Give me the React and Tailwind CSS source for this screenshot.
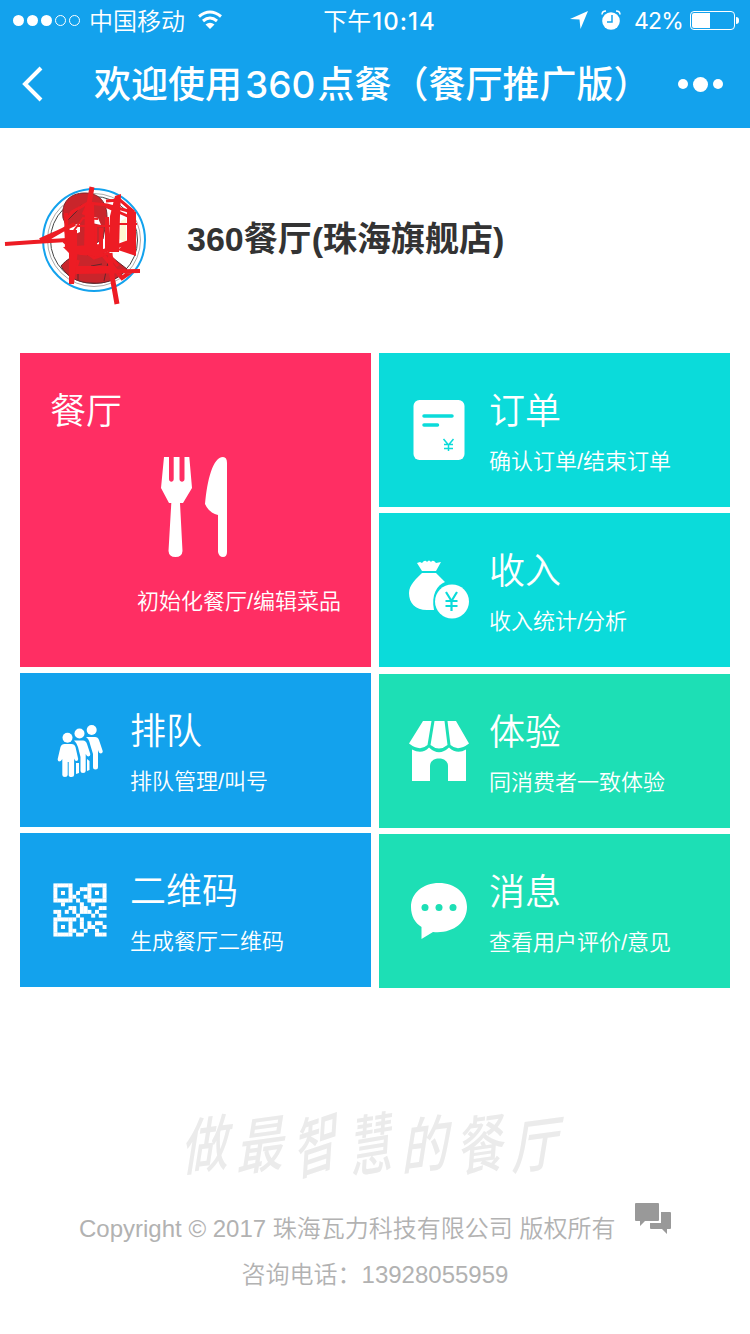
import React from "react";

const qrRows = [
  "11111....11111",
  "1...1..111...1",
  "1.1.1.1..1.1.1",
  "1...11..11...1",
  "11111.1..11111",
  "..1....1..1...",
  "....11.11...11",
  "11.1.1.111.1..",
  ".1....1...1.11",
  "111111.1......",
  "1...1..1.1.11.",
  "1.1.1..1.11..1",
  "1...11..1..1..",
  "11111.11...111",
];

const ForkKnife = () => (
  <svg width="68" height="100" viewBox="0 0 68 100" fill="white">
    <path d="M3 0H8V22C8 25.500 12.700 25.500 12.700 22V0H18.500V22C18.500 25.500 23.500 25.500 23.500 22V0H28.300L31 31L22 46H19L21.500 94Q21 100 14.500 100Q8 100 7.500 94L10.300 46H8L0 31Z" />
    <path d="M66 6Q66 0 62 0C52 0 46 23 44 47Q48 56 57 58V95Q58 100 62 100Q66 100 66 95Z" />
  </svg>
);

const OrderIcon = () => (
  <svg width="60" height="60" viewBox="0 0 60 60">
    <rect x="4.500" width="51" height="60" rx="6" fill="white" />
    <path d="M15 16H43M15 25H28.500" stroke="#0bdbda" strokeWidth="3.5" strokeLinecap="round" />
    <path d="M34.500 39L39.500 45L44.500 39M39.500 45V51M35 44.500H44M35 48.500H44" stroke="#0bdbda" strokeWidth="1.500" fill="none" />
  </svg>
);

const IncomeIcon = () => (
  <svg width="60" height="60" viewBox="0 0 60 60">
    <path d="M8 3L11 2L13 3Q16-1 18 2Q20-1 22 2Q24-1 27 3L32 2L27 11H13Z" fill="white" />
    <path d="M13 13H27L36 22C28 25 22 35 25 50H18C6 50 0 43 0 33C0 25 7 19 13 13Z" fill="white" />
    <circle cx="43" cy="41.500" r="17" fill="white" />
    <path d="M37 32L42.500 41L48 32M42.500 41V51M36.500 41H48.500M36.500 46H48.500" stroke="#0bdbda" strokeWidth="2.200" fill="none" />
  </svg>
);

const ShopIcon = () => (
  <svg width="60" height="60" viewBox="0 0 60 60" fill="white">
    <path d="M14 0H22.500L18.500 24Q11 31 0 22.500ZM25.500 0H35.500L38.500 24Q30 31 21.500 24ZM38.500 0H47L60 22.500Q49 31 41.500 24Z" />
    <path d="M3 28.500Q13 34 20 26.500Q30 36 40 26.500Q48 34 57 28.500V60H39V45C39 35 21 35 21 45V60H3Z" />
  </svg>
);

const MessageIcon = () => (
  <svg width="60" height="60" viewBox="0 0 60 60">
    <path d="M30 2C46 2 58 12 58 26C58 42 43 53 24 51L12.500 58V46C6 42 2 35 2 26C2 12 14 2 30 2Z" fill="white" />
    <g fill="#1ddfb5">
      <circle cx="16" cy="26.500" r="3.500" />
      <circle cx="30" cy="26.500" r="3.500" />
      <circle cx="44" cy="26.500" r="3.500" />
    </g>
  </svg>
);

const QueueIcon = () => (
  <svg width="60" height="60" viewBox="0 0 60 60" fill="white">
    <circle cx="41.700" cy="10" r="5" />
    <path d="M36 17H45Q48 17 49 20L52.700 31Q53 33 51 33.500Q49 33.500 48 30V47Q48 49.500 45.500 49.500Q43 49.500 43 47V34L40 24Q39 19 36 17Z" />
    <path d="M37 39L39.500 41V50L37 51Z" />
    <circle cx="29.500" cy="13.500" r="5" />
    <path d="M24 20.500H33Q36 20.500 37 24L40.300 34Q40.500 36 38.500 36.500Q37 36.500 35.700 34V51Q35.700 53 33 53Q30.500 53 30.500 51V37L28 27Q27 23 24 20.500Z" />
    <path d="M26 43H29V53L26 54Z" />
    <g transform="translate(7.500 13)">
      <circle cx="10" cy="4.700" r="5" />
      <path d="M7 11H14Q17 11 18 14L20.700 26Q20.700 28 18.800 28Q17.500 28 16.600 25.500V42Q16.600 44 14 44Q11.200 44 11.200 42V29H10.200V42Q10 44 7.500 44Q4.800 44 4.800 42V26Q3.500 28.500 1.500 28.500Q0 28 .2 26L3 14Q4 11 7 11Z" />
    </g>
  </svg>
);

const QrIcon = () => (
  <svg width="60" height="60" viewBox="0 0 60 60" fill="white">
    {qrRows.map((row, y) =>
      row.split("").map((c, x) =>
        c === "1" ? (
          <rect key={x + "-" + y} x={3.4 + x * 3.78} y={3.4 + y * 3.78} width="4" height="4" />
        ) : null
      )
    )}
  </svg>
);

const Tile = ({ icon, title, desc, className }) => (
  <div className={"flex h-[154px] pl-[30px] pt-[47px] text-white " + className}>
    {icon}
    <div className="-mt-3 ml-5 whitespace-nowrap">
      <div className="text-[36px] font-[350] leading-[48px]">{title}</div>
      <div className="mt-[10px] text-[22px] font-[350] leading-8">{desc}</div>
    </div>
  </div>
);

const StatusBar = () => (
  <div className="flex h-10 items-center justify-between pl-[13px] pr-[11px] font-['Inter','Noto_Sans_CJK_SC',sans-serif] text-2xl">
    <div className="flex w-[308px] items-center">
      <div className="flex gap-[3px]">
        <i className="size-[11px] rounded-full bg-white" />
        <i className="size-[11px] rounded-full bg-white" />
        <i className="size-[11px] rounded-full bg-white" />
        <i className="size-[11px] rounded-full border border-white" />
        <i className="size-[11px] rounded-full border border-white" />
      </div>
      <span className="mt-[3px] ml-[9px] font-[350]">中国移动</span>
      <svg className="ml-3" width="26" height="20" viewBox="0 0 26 20">
        <path d="M2 6.500Q13-2.500 24 6.500M6 11Q13 5 20 11" stroke="white" strokeWidth="3" fill="none" />
        <path d="M8.500 14.500Q13 11 17.500 14.500L13 19Z" fill="white" />
      </svg>
    </div>
    <div className="mt-[3px] flex whitespace-nowrap">
      <span className="font-normal">下午</span>
      <span className="ml-px font-medium tracking-[1px]">10:14</span>
    </div>
    <div className="flex w-[301px] items-center justify-end">
      <svg className="mt-px" width="18" height="19" viewBox="0 0 18 19" fill="white">
        <path d="M18 0L10.500 18L9.500 8.500L0 8Z" />
      </svg>
      <svg className="ml-[13px]" width="20" height="20" viewBox="0 0 20 20">
        <circle cx="10" cy="11" r="8.800" fill="white" />
        <path d="M1 4.500Q1 1 5 1M15 1Q19 1 19 4.500" stroke="white" strokeWidth="1.500" fill="none" />
        <path d="M11 5V12H6" stroke="#13a2ed" strokeWidth="1.500" fill="none" />
      </svg>
      <span className="mt-[3px] ml-[13px] text-[23px] tracking-[-0.8px]">42%</span>
      <div className="ml-[7px] flex h-[19px] w-[45px] rounded-[4px] border border-white p-px">
        <i className="w-[18px] rounded-l-[2px] bg-white" />
      </div>
      <i className="ml-px h-[7px] w-[3px] rounded-r-full bg-white" />
    </div>
  </div>
);

const Avatar = () => (
  <svg width="150" height="130" viewBox="0 0 150 130" fill="none">
    <circle cx="94" cy="65" r="51" fill="white" stroke="#13a2ed" strokeWidth="2" />
    <circle cx="94" cy="65" r="46.500" stroke="#aaa" />
    <circle cx="94" cy="65" r="43.500" stroke="#444" />
    <path d="M63 43C61 27 70 18 85 18C100 18 107 28 107 42L103 64L78 79Z" fill="#c9252b" stroke="#81272b" />
    <path d="M61 91C67 84 72 82 80 78H107L118 87L127 94C118 106 103 109 92 108C78 108 67 102 61 91Z" fill="#c9252b" stroke="#65252b" />
    <path d="M78 93V105M108 87L104 106M68 40L82 30M67 46L78 35M87 80L98 76L104 82M91 91L102 89" stroke="#65252b" />
    <path d="M69 52L80 48L80 57L71 61ZM90 41L98 43L101 50L92 48Z" fill="white" />
    <path d="M121 46L126 43V68L119 64Z" fill="#fff8d2" />
    <g stroke="#ed1c24" strokeWidth="4">
      <path d="M5 69L34 67L67 65H77M40 65L58 57L75 49M47 64L66 53" />
      <path d="M66 38L67 74M70 55L72 104L78 85" />
      <path d="M66 45L72 37L88 28L107 30L132 37M106 26L120 25L134 37M105 31L132 43" strokeWidth="3" />
      <path d="M92 12L89 29L84 40" strokeWidth="5" />
      <path d="M70 61L83 43L98 44M77 51H111M112 49H137" strokeWidth="2" />
      <path d="M64 66L75 75L104 76L132 66M95 51V70M101 53V76M107 42V74" />
      <path d="M76 97L140 96M104 81L122 103L132 96" />
      <path d="M110 78L112 101L117 129" strokeWidth="5" />
      <path d="M80 72L94 83L108 78L118 91" strokeWidth="3" />
    </g>
    <path d="M64 55H77V75H69ZM69 75H78L74 109H69ZM85 31L94 28L95 76H84ZM115 21L121 19L120 40L119 77H108L110 41ZM127 33L136 37V81L118 75L127 66ZM63 72L101 69L104 82L70 79ZM76 91H115V98H76Z" fill="#ed1c24" />
  </svg>
);

const App = () => {
  return (
    <div className="h-[1334px] w-[750px] overflow-hidden bg-white font-['Liberation_Sans','Noto_Sans_CJK_SC',sans-serif]">
      <header className="h-32 bg-[#13a2ed] text-white">
        <StatusBar />
        <div className="flex h-[88px] items-center pl-[22px] pr-[27px]">
          <svg width="21" height="36" viewBox="0 0 21 36" fill="none">
            <path d="M19 2L3 18L19 34" stroke="white" strokeWidth="4" />
          </svg>
          <h1 className="mt-[2px] ml-[51px] font-['Inter','Noto_Sans_CJK_SC',sans-serif] text-[37px] font-medium whitespace-nowrap">
            欢迎使用<span className="mr-[2px] ml-[3px]">360</span>点餐（餐厅推广版）
          </h1>
          <div className="ml-auto flex items-center gap-[5px]">
            <i className="size-[10px] rounded-full bg-white" />
            <i className="size-[15px] rounded-full bg-white" />
            <i className="size-[10px] rounded-full bg-white" />
          </div>
        </div>
      </header>

      <div className="flex h-[225px] pt-[47px]">
        <Avatar />
        <h2 className="ml-[37px] mt-[39px] text-[34px] font-bold leading-[50px] text-[#333]">360餐厅(珠海旗舰店)</h2>
      </div>

      <main className="flex gap-2 px-5">
        <div className="flex w-[351px] flex-col gap-[6px]">
          <div className="flex h-[314px] flex-col bg-[#ff2e63] text-white">
            <div className="mt-[35px] ml-[30px] text-[36px] font-[350] leading-[48px]">餐厅</div>
            <div className="mt-[21px] ml-[141px]">
              <ForkKnife />
            </div>
            <div className="mt-[29px] mr-[30px] text-right text-[22px] font-[350] leading-8">初始化餐厅/编辑菜品</div>
          </div>
          <Tile icon={<QueueIcon />} title="排队" desc="排队管理/叫号" className="bg-[#13a2ed]" />
          <Tile icon={<QrIcon />} title="二维码" desc="生成餐厅二维码" className="bg-[#13a2ed]" />
        </div>
        <div className="flex w-[351px] flex-col gap-[6px]">
          <Tile icon={<OrderIcon />} title="订单" desc="确认订单/结束订单" className="bg-[#0bdbda]" />
          <Tile icon={<IncomeIcon />} title="收入" desc="收入统计/分析" className="bg-[#0bdbda]" />
          <Tile icon={<ShopIcon />} title="体验" desc="同消费者一致体验" className="mt-px bg-[#1ddfb5]" />
          <Tile icon={<MessageIcon />} title="消息" desc="查看用户评价/意见" className="bg-[#1ddfb5]" />
        </div>
      </main>

      <footer className="mt-[117px] text-[#b2b2b2]">
        <div className="ml-[185px] flex h-[82px] w-[376px] items-center justify-between text-[46px] font-medium text-[#ebebeb]">
          <span className="-skew-x-12 -skew-y-6 scale-y-135">做</span>
          <span className="-skew-x-12 -skew-y-6 scale-y-135">最</span>
          <span className="-skew-x-6 -skew-y-12 scale-x-90 scale-y-145">智</span>
          <span className="-skew-x-6 -skew-y-6 scale-x-90 scale-y-145">慧</span>
          <span className="-skew-x-12 -skew-y-6 scale-y-135">的</span>
          <span className="-skew-x-6 -skew-y-6 scale-y-140">餐</span>
          <span className="-skew-x-12 -skew-y-6 scale-y-130">厅</span>
        </div>
        <div className="mt-[14px] ml-[79px] flex">
          <p className="mt-[11px] text-2xl font-[350] leading-[34px] whitespace-nowrap">Copyright © 2017 珠海瓦力科技有限公司 版权所有</p>
          <svg className="mt-[2px] ml-5" width="37" height="32" viewBox="0 0 37 32" fill="#999">
            <path d="M1 0H23Q24 0 24 1V17Q24 18 23 18H10L5 23V18H1Q0 18 0 17V1Q0 0 1 0Z" />
            <path d="M26 9H35Q36 9 36 10V25Q36 26 35 26H32V31L27 26H16Q15 26 15 25V20H26Z" />
          </svg>
        </div>
        <p className="mt-3 text-center text-2xl font-[350] leading-[34px]">咨询电话：13928055959</p>
      </footer>
    </div>
  );
};

export default App;
